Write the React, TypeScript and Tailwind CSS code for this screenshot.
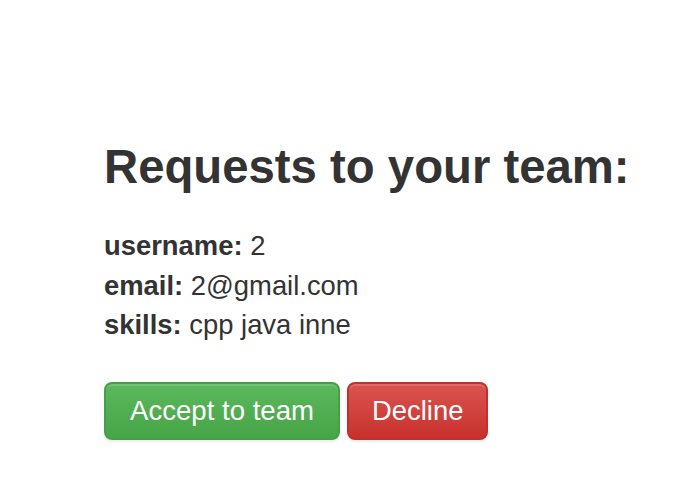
const requestUser = {
  username: "2",
  email: "2@gmail.com",
  skills: "cpp java inne",
};

const App = () => {
  return (
    <div className="min-h-screen bg-white font-['Liberation_Sans',Arial,sans-serif] text-[#333333] pl-[104px] pt-[141px]">
      <h3 className="text-[47.3px] leading-[52px] font-bold">Requests to your team:</h3>

      <div className="mt-[33px] text-[27.4px] leading-[39.5px]">
        <div>
          <b>username:</b> {requestUser.username}
        </div>
        <div>
          <b>email:</b> {requestUser.email}
        </div>
        <div>
          <b>skills:</b> {requestUser.skills}
        </div>
      </div>

      <div className="mt-[37px] flex gap-[7px]">
        <button className="h-[58px] px-[24px] rounded-[8px] border-2 border-[#45a045] bg-gradient-to-b from-[#5cb85c] to-[#47a447] text-white text-[27.6px] shadow-[inset_0_2px_0_rgba(255,255,255,0.15),0_2px_3px_rgba(0,0,0,0.08)]">
          Accept to team
        </button>
        <button className="h-[58px] px-[23px] rounded-[8px] border-2 border-[#c0302c] bg-gradient-to-b from-[#d9534f] to-[#c9302c] text-white text-[27.4px] shadow-[inset_0_2px_0_rgba(255,255,255,0.15),0_2px_3px_rgba(0,0,0,0.08)]">
          Decline
        </button>
      </div>
    </div>
  );
};

export default App;
